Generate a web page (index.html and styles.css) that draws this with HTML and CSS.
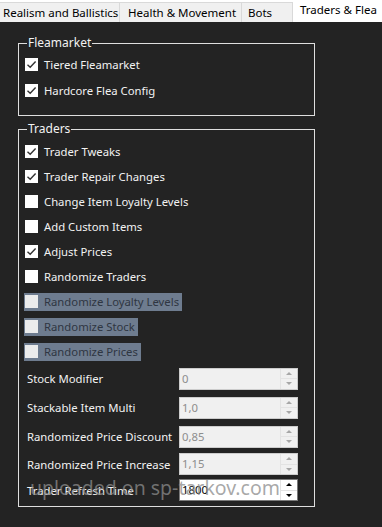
FILE: index.html
```html
<!DOCTYPE html>
<html lang="en">
<head>
  <meta charset="UTF-8">
  <meta name="viewport" content="width=device-width, initial-scale=1.0">
  <title>Traders &amp; Flea</title>
  <link rel="stylesheet" href="styles.css">
</head>
<body>

  <nav class="tabs">
    <div class="tab tab-1">Realism and Ballistics</div>
    <div class="tab tab-2">Health &amp; Movement</div>
    <div class="tab tab-3">Bots</div>
    <div class="tab tab-active">Traders &amp; Flea</div>
  </nav>

  <main class="page">

    <fieldset class="group group-flea">
      <legend>Fleamarket</legend>
      <div class="row">
        <label class="check"><span class="box"><svg viewBox="0 0 13 13"><polyline points="2.5,6.8 5.2,9.3 10.6,3.6"/></svg></span>Tiered Fleamarket</label>
      </div>
      <div class="row">
        <label class="check"><span class="box"><svg viewBox="0 0 13 13"><polyline points="2.5,6.8 5.2,9.3 10.6,3.6"/></svg></span>Hardcore Flea Config</label>
      </div>
    </fieldset>

    <fieldset class="group group-traders">
      <legend>Traders</legend>
      <div class="row">
        <label class="check"><span class="box"><svg viewBox="0 0 13 13"><polyline points="2.5,6.8 5.2,9.3 10.6,3.6"/></svg></span>Trader Tweaks</label>
      </div>
      <div class="row">
        <label class="check"><span class="box"><svg viewBox="0 0 13 13"><polyline points="2.5,6.8 5.2,9.3 10.6,3.6"/></svg></span>Trader Repair Changes</label>
      </div>
      <div class="row">
        <label class="check"><span class="box"></span>Change Item Loyalty Levels</label>
      </div>
      <div class="row">
        <label class="check"><span class="box"></span>Add Custom Items</label>
      </div>
      <div class="row">
        <label class="check"><span class="box"><svg viewBox="0 0 13 13"><polyline points="2.5,6.8 5.2,9.3 10.6,3.6"/></svg></span>Adjust Prices</label>
      </div>
      <div class="row">
        <label class="check"><span class="box"></span>Randomize Traders</label>
      </div>
      <div class="row">
        <label class="check check-off"><span class="box"></span>Randomize Loyalty Levels</label>
      </div>
      <div class="row">
        <label class="check check-off"><span class="box"></span>Randomize Stock</label>
      </div>
      <div class="row">
        <label class="check check-off"><span class="box"></span>Randomize Prices</label>
      </div>

      <div class="field">
        <span class="field-label">Stock Modifier</span>
        <div class="spin spin-off"><span class="spin-value">0</span><span class="spin-btns"><i class="up"></i><i class="down"></i></span></div>
      </div>
      <div class="field">
        <span class="field-label">Stackable Item Multi</span>
        <div class="spin spin-off"><span class="spin-value">1,0</span><span class="spin-btns"><i class="up"></i><i class="down"></i></span></div>
      </div>
      <div class="field">
        <span class="field-label">Randomized Price Discount</span>
        <div class="spin spin-off"><span class="spin-value">0,85</span><span class="spin-btns"><i class="up"></i><i class="down"></i></span></div>
      </div>
      <div class="field field-short">
        <span class="field-label">Randomized Price Increase</span>
        <div class="spin spin-off"><span class="spin-value">1,15</span><span class="spin-btns"><i class="up"></i><i class="down"></i></span></div>
      </div>
      <div class="field field-short">
        <span class="field-label">Trader Refresh Time</span>
        <div class="spin"><span class="spin-value">1800</span><span class="spin-btns"><i class="up"></i><i class="down"></i></span></div>
      </div>
    </fieldset>

    <div class="watermark">uploaded on sp-tarkov.com</div>
  </main>

</body>
</html>
```

FILE: styles.css
```css
body {
  margin: 0;
  height: 527px;
  background-color: #232323;
  font-family: "Noto Sans", "Open Sans", sans-serif;
  font-size: 11.3px;
  color: #f2f2f2;
  white-space: nowrap;
  overflow: hidden;
}

/* tab strip */
.tabs {
  display: flex;
  height: 22px;
  background-color: #ffffff;
  overflow: hidden;
}

.tab {
  box-sizing: border-box;
  height: 20px;
  margin-top: 2px;
  line-height: 19px;
  font-size: 11.5px;
  color: #000;
  background-color: #f0f0f0;
  border: 1px solid #d9d9d9;
  border-bottom: none;
  overflow: hidden;
}

.tab-1 {
  width: 120px;
  padding-left: 3px;
  border-left: none;
}

.tab-2 {
  width: 122px;
  padding-left: 8px;
  border-left: none;
}

.tab-3 {
  width: 51px;
  padding-left: 6px;
  border-left: none;
}

.tab-active {
  width: 86px;
  height: 22px;
  margin-top: 0;
  line-height: 19px;
  padding-left: 7px;
  background-color: #ffffff;
  border: none;
}

/* content */
.page {
  position: relative;
  padding: 13px 0 0 18px;
}

.group {
  box-sizing: border-box;
  width: 297px;
  margin: 0;
  padding: 0 0 0 6px;
  border: 1px solid #dedede;
}

.group legend {
  padding: 0 1px;
  margin-left: 2px;
  line-height: 16px;
  font-size: 12px;
  color: #f2f2f2;
}

.group-flea {
  padding-top: 0;
  padding-bottom: 12px;
}

.group-traders {
  margin-top: 5px;
  padding-top: 2px;
  padding-bottom: 3px;
}

.group-flea .row {
  height: 26px;
}

.row {
  display: flex;
  align-items: center;
  height: 25px;
}

.check {
  display: inline-flex;
  align-items: center;
  height: 18px;
  padding-right: 3px;
}

.check .box {
  box-sizing: border-box;
  width: 13px;
  height: 13px;
  margin-right: 6px;
  background-color: #ffffff;
}

.check .box svg {
  display: block;
  width: 13px;
  height: 13px;
  fill: none;
  stroke: #333333;
  stroke-width: 1.4;
}

.check-off {
  margin-left: -1px;
  padding-left: 1px;
  background-color: #6e7c8f;
  color: #2f3642;
}

.check-off .box {
  background-color: #ececec;
}

/* numeric fields */
.field {
  display: flex;
  align-items: center;
  height: 29px;
  margin-left: 2px;
}

.field-short {
  height: 26px;
}

.field-label {
  width: 152px;
}

.spin {
  box-sizing: border-box;
  display: flex;
  width: 119px;
  height: 22px;
  background-color: #ffffff;
  border: 1px solid #7a7a7a;
  color: #000;
}

.spin-off {
  background-color: #f0f0f0;
  border-color: #cccccc;
  color: #8d8d8d;
}

.spin-value {
  flex: 1;
  padding-left: 2px;
  line-height: 19px;
}

.spin-btns {
  display: flex;
  flex-direction: column;
  width: 16px;
  border-left: 1px solid #e3e3e3;
}

.spin-btns i {
  flex: 1;
  display: flex;
  align-items: center;
  justify-content: center;
}

.spin-btns .up {
  border-bottom: 1px solid #e3e3e3;
}

.spin-btns .up::before,
.spin-btns .down::before {
  content: "";
  border-left: 3px solid transparent;
  border-right: 3px solid transparent;
}

.spin-btns .up::before {
  border-bottom: 3px solid #000;
}

.spin-btns .down::before {
  border-top: 3px solid #000;
}

.spin-off .spin-btns .up::before {
  border-bottom-color: #a6a6a6;
}

.spin-off .spin-btns .down::before {
  border-top-color: #a6a6a6;
}

.watermark {
  position: absolute;
  left: 30px;
  top: 452px;
  font-size: 19.5px;
  color: rgba(140, 140, 140, 0.75);
  pointer-events: none;
}
```
